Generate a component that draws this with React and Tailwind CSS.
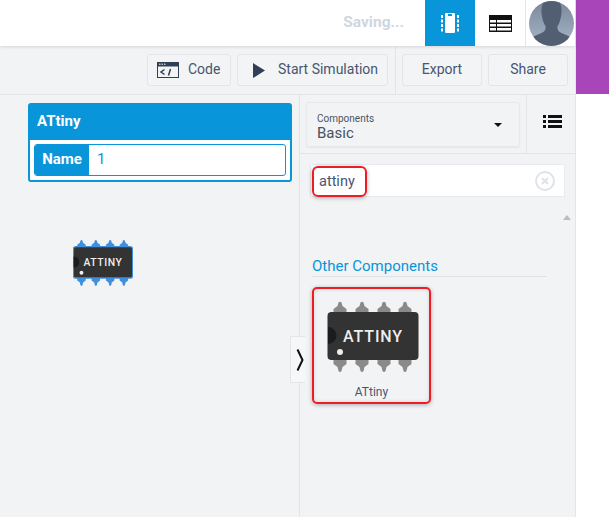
const font = { fontFamily: "Roboto, 'Liberation Sans', sans-serif" };

function Chip({ className, pin = "#8a8a8a", outline }) {
  const xs = [13, 35, 57, 78];
  return (
    <svg viewBox="0 0 92 76" className={className}>
      {xs.map((x) => (
        <g key={x} fill={pin}>
          <path d={`M${x - 6.5} 14 v-4 l4 -3 l1 -3.5 q1.5 -1.5 3 0 l1 3.5 l4 3 v4 z`} />
          <path d={`M${x - 6.5} 60 v5 l4 3 l1 4 q1.5 2 3 0 l1 -4 l4 -3 v-5 z`} />
        </g>
      ))}
      <rect
        x="0.5"
        y="13"
        width="91"
        height="48"
        rx="4"
        fill="#333333"
        stroke={outline || "none"}
        strokeWidth={outline ? 2 : 0}
      />
      <path d="M1 28 a8.5 8.5 0 0 1 0 17 z" fill="#1c1c1c" />
      <circle cx="13" cy="53" r="3" fill="#eeeeee" />
      <text
        x="46"
        y="43"
        textAnchor="middle"
        fill="#eeeeee"
        fontSize="16"
        fontWeight="500"
        letterSpacing="0.9"
        fontFamily="Roboto, sans-serif"
      >
        ATTINY
      </text>
    </svg>
  );
}

function ToolButton({ children, className }) {
  return (
    <button
      className={`h-8 flex items-center border border-[#e3e5e9] rounded-[3px] bg-[#f3f4f6] text-[14px] text-[#47566f] ${className}`}
    >
      {children}
    </button>
  );
}

export default function App() {
  return (
    <div style={font} className="flex w-[609px] h-[517px] overflow-hidden bg-white">
      <div className="w-[576px] h-full flex flex-col bg-[#f2f3f5] border-r border-[#e3e5e9]">
        {/* top bar */}
        <div className="h-[46px] shrink-0 flex items-center justify-end bg-white shadow-[0_1px_3px_rgba(0,0,0,0.12)] z-10">
          <span className="text-[15.5px] font-bold text-[#cfd6df] mr-[21px]">Saving...</span>
          <div className="w-[50px] h-full flex items-center justify-center bg-[#0995d9]">
            <svg viewBox="0 0 18 20" className="w-[18px] h-5" fill="white">
              <path d="M4 1 q0 -1 1 -1 h8 q1 0 1 1 v18 q0 1 -1 1 h-8 q-1 0 -1 -1 z M7 1 v2 h4 v-2 z" fillRule="evenodd" />
              <rect x="0" y="2" width="2" height="3" />
              <rect x="0" y="6.5" width="2" height="3" />
              <rect x="0" y="11" width="2" height="3" />
              <rect x="0" y="15.5" width="2" height="3" />
              <rect x="16" y="2" width="2" height="3" />
              <rect x="16" y="6.5" width="2" height="3" />
              <rect x="16" y="11" width="2" height="3" />
              <rect x="16" y="15.5" width="2" height="3" />
            </svg>
          </div>
          <div className="w-[50px] h-full flex items-center justify-center">
            <svg viewBox="0 0 23 17" className="w-[23px] h-[17px]">
              <rect width="23" height="17" fill="#111111" />
              <rect x="1" y="5" width="6" height="2.5" fill="white" />
              <rect x="8" y="5" width="14" height="2.5" fill="white" />
              <rect x="1" y="9" width="6" height="2.5" fill="white" />
              <rect x="8" y="9" width="14" height="2.5" fill="white" />
              <rect x="1" y="13" width="6" height="2.5" fill="white" />
              <rect x="8" y="13" width="14" height="2.5" fill="white" />
            </svg>
          </div>
          <div className="h-full w-[50px] flex items-center border-l border-[#e3e5e9] pl-[3px]">
            <svg viewBox="0 0 45 45" className="w-[45px] h-[45px]">
              <defs>
                <linearGradient id="avatar" x1="0" y1="0" x2="0" y2="1">
                  <stop offset="0" stopColor="#7a889c" />
                  <stop offset="1" stopColor="#a8b6c9" />
                </linearGradient>
                <clipPath id="round">
                  <circle cx="22.5" cy="22.5" r="22.5" />
                </clipPath>
              </defs>
              <circle cx="22.5" cy="22.5" r="22.5" fill="url(#avatar)" />
              <path
                clipPath="url(#round)"
                d="M15 0 h15 q3 5 2.5 12 q-1 9 -4 13 q-1 5 4 7 l7 3 q4 2 5 10 h-44 q1 -8 5 -10 l7 -3 q5 -2 4 -7 q-3 -4 -4 -13 q-.5 -7 2.5 -12 z"
                fill="#525f73"
              />
            </svg>
          </div>
        </div>

        {/* toolbar */}
        <div className="h-[49px] shrink-0 flex items-center justify-end border-b border-[#e3e5e9] pr-[7px]">
          <ToolButton className="w-[84px] pl-[9px] gap-[9px]">
            <svg viewBox="0 0 22 16" className="w-[22px] h-4" fill="none" stroke="#2f3f56">
              <rect x="0.5" y="0.5" width="21" height="15" strokeWidth="1" />
              <rect x="0" y="0" width="22" height="4.5" fill="#2f3f56" stroke="none" />
              <path d="M2 2.2 h1.5 M4.5 2.2 h1.5 M7 2.2 h1.5" stroke="white" strokeWidth="1" />
              <path d="M7.5 7.5 l-3.5 2.5 l3.5 2.5 M13.5 7 l-2 6.5" strokeWidth="1.5" />
            </svg>
            <span className="pb-[2px]">Code</span>
          </ToolButton>
          <ToolButton className="w-[151px] ml-[6px] pl-[15px] gap-[13px]">
            <svg viewBox="0 0 12 15" className="w-3 h-[15px]" fill="#2f3f56">
              <path d="M0 0 L12 7.5 L0 15 z" />
            </svg>
            <span className="pb-[2px]">Start Simulation</span>
          </ToolButton>
          <div className="w-px h-full bg-[#e3e5e9] ml-[7px] mr-[6px]" />
          <ToolButton className="w-[80px] justify-center pb-[2px]">Export</ToolButton>
          <ToolButton className="w-[80px] ml-[6px] justify-center pb-[2px]">Share</ToolButton>
        </div>

        <div className="flex-1 flex min-h-0">
          {/* canvas */}
          <div className="w-[300px] shrink-0 pl-[28px] pt-[8px] pr-[7px] relative border-r border-[#e3e5e9]">
            <div className="border-2 border-[#0995d9] rounded-[3px] bg-white">
              <div className="h-[35px] flex items-center bg-[#0995d9] pl-[7px] pb-[2px] text-[15px] font-bold text-white">
                ATtiny
              </div>
              <div className="flex h-[32px] mx-1 my-[4px] border border-[#0995d9] rounded-[3px] overflow-hidden">
                <div className="w-[54px] flex items-center justify-center bg-[#0995d9] pb-[2px] text-[15px] font-bold text-white">
                  Name
                </div>
                <div className="flex-1 flex items-center pl-2 pb-[2px] text-[15px] text-[#0995d9]">1</div>
              </div>
            </div>
            <Chip className="absolute left-[73px] top-[143px] w-[60px] h-[50px]" pin="#3f8fdc" outline="#3f8fdc" />
            <div className="absolute left-[290px] top-[241px] w-[15px] h-[47px] flex items-center justify-center bg-[#f6f7f8] border border-r-0 border-[#e3e5e9]">
              <svg viewBox="0 0 8 22" className="w-2 h-[22px] ml-[3px]" fill="none" stroke="#111111" strokeWidth="2">
                <path d="M1.5 0.5 L6.5 11 L1.5 21.5" />
              </svg>
            </div>
          </div>

          {/* component panel */}
          <div className="flex-1 flex flex-col min-w-0">
            <div className="h-[59px] shrink-0 flex border-b border-[#e3e5e9]">
              <div className="flex-1 px-[6px] pt-[7px]">
                <div className="h-[45px] flex items-center justify-between rounded-[3px] border border-[#e6e8eb] shadow-[0_1px_2px_rgba(0,0,0,0.06)] pl-[10px] pr-[17px]">
                  <div className="flex flex-col pt-[6px]">
                    <span className="text-[10px] leading-[11px] text-[#4a5560]">Components</span>
                    <span className="text-[15px] leading-[19px] text-[#47525e]">Basic</span>
                  </div>
                  <div className="w-0 h-0 border-x-[4px] border-x-transparent border-t-[4px] border-t-[#111111]" />
                </div>
              </div>
              <div className="w-[49px] shrink-0 flex items-center justify-center border-l border-[#e3e5e9]">
                <svg viewBox="0 0 19 13" className="w-[19px] h-[13px] mb-[5px] ml-[2px]" fill="#111111">
                  <rect x="0" y="0" width="3" height="3" />
                  <rect x="5" y="0" width="14" height="3" />
                  <rect x="0" y="5" width="3" height="3" />
                  <rect x="5" y="5" width="14" height="3" />
                  <rect x="0" y="10" width="3" height="3" />
                  <rect x="5" y="10" width="14" height="3" />
                </svg>
              </div>
            </div>

            <div className="relative flex-1 min-h-0 flex flex-col pl-[10px]">
              <div className="h-[33px] mt-[10px] mr-[10px] flex items-center justify-between bg-white border border-[#e8eaed] pl-2 pr-[9px] text-[14.5px] text-[#47566f]">
                <span className="pt-[2px]">attiny</span>
                <div className="w-5 h-5 rounded-full border-2 border-[#dfe3e8] flex items-center justify-center">
                  <svg viewBox="0 0 8 8" className="w-2 h-2" stroke="#dfe3e8" strokeWidth="2">
                    <path d="M1 1 L7 7 M7 1 L1 7" />
                  </svg>
                </div>
              </div>
              {/* red highlight over the search text */}
              <div className="absolute left-[12px] top-[12px] w-[55px] h-[31px] rounded-[6px] border-2 border-[#ee1c25] shadow-[0_1px_4px_rgba(0,0,0,0.3)]" />
              <div className="absolute right-[4px] top-[61px] w-0 h-0 border-x-[4px] border-x-transparent border-b-[5px] border-b-[#b9bcc1]" />

              <div className="mt-[60px] ml-[2px] mr-[28px] h-[20px] flex items-center border-b border-[#e0e2e6] text-[15px] text-[#0995d9]">
                Other Components
              </div>
              <div className="mt-[10px] ml-[2px] w-[119px] h-[117px] rounded-[5px] border-2 border-[#ee1c25] shadow-[0_1px_4px_rgba(0,0,0,0.3),inset_0_0_4px_rgba(0,0,0,0.12)] flex flex-col items-center pt-[10px]">
                <Chip className="ml-[3px] w-[92px] h-[76px] shrink-0" />
                <span className="mt-[8px] text-[12px] text-[#47566f]">ATtiny</span>
              </div>
            </div>
          </div>
        </div>
      </div>
      <div className="w-[33px] h-[94px] bg-[#a845b8]" />
    </div>
  );
}
